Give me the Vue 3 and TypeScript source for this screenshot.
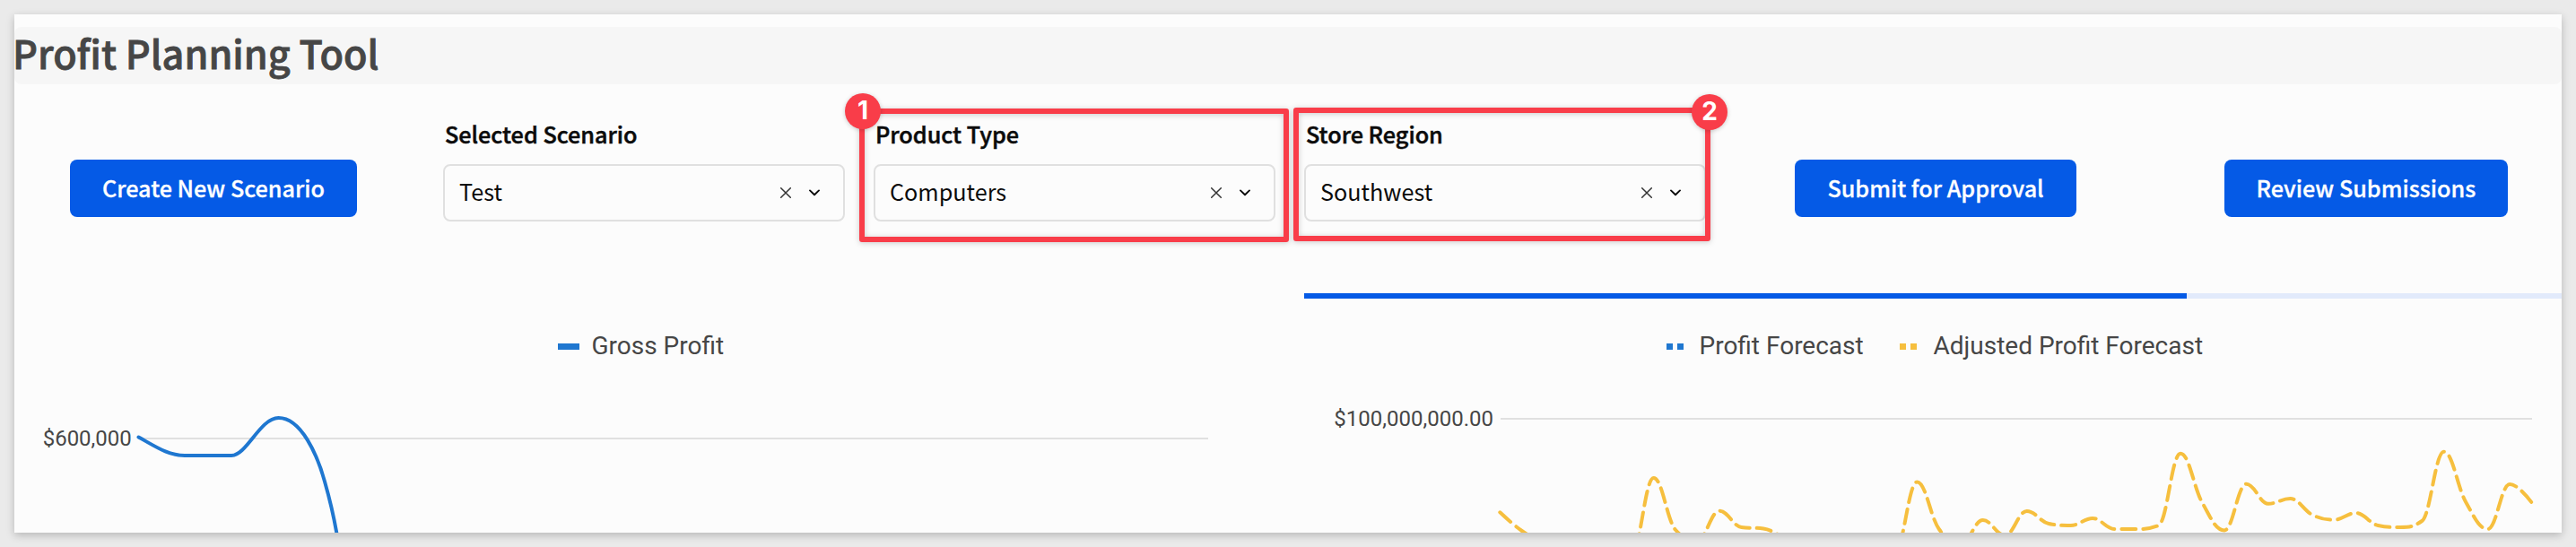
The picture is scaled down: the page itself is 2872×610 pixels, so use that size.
<script setup lang="ts">
interface Point {
  x: number
  y: number
}

const filters = [
  { id: 'scenario', label: 'Selected Scenario', value: 'Test', mark: '' },
  { id: 'product', label: 'Product Type', value: 'Computers', mark: '1' },
  { id: 'region', label: 'Store Region', value: 'Southwest', mark: '2' },
]

// Smooth curve whose control points never overshoot a local extreme.
function spline(points: Point[]): string {
  const s = 1.5
  const d = s + 1
  let path = `M${points[0].x} ${points[0].y}`
  let out: Point = points[0]
  for (let i = 1; i < points.length; i++) {
    const last = points[i - 1]
    const p = points[i]
    const next = points[i + 1]
    let left: Point = p
    let right: Point = p
    if (next) {
      const lx = (s * p.x + last.x) / d
      let ly = (s * p.y + last.y) / d
      const rx = (s * p.x + next.x) / d
      let ry = (s * p.y + next.y) / d
      const correction = rx !== lx ? ((ry - ly) * (rx - p.x)) / (rx - lx) + p.y - ry : 0
      ly += correction
      ry += correction
      if (ly > last.y && ly > p.y) {
        ly = Math.max(last.y, p.y)
        ry = 2 * p.y - ly
      } else if (ly < last.y && ly < p.y) {
        ly = Math.min(last.y, p.y)
        ry = 2 * p.y - ly
      }
      if (ry > next.y && ry > p.y) {
        ry = Math.max(next.y, p.y)
        ly = 2 * p.y - ry
      } else if (ry < next.y && ry < p.y) {
        ry = Math.min(next.y, p.y)
        ly = 2 * p.y - ry
      }
      left = { x: lx, y: ly }
      right = { x: rx, y: ry }
    }
    path += ` C${out.x} ${out.y} ${left.x} ${left.y} ${p.x} ${p.y}`
    out = right
  }
  return path
}

const grossProfit =
  'M154.5 487.5C175 499 188 508 206 508H258C275 508 290 466 310.5 466C336 466 354 508 362 537C368 558 373 580 376.3 600'

const adjusted = spline(
  [
    571.3, 592, 605, 613, 617, 619, 617.5, 533, 591, 602, 569.7, 588, 589.5, 600, 610, 613, 615,
    615, 614.3, 537.5, 590, 606.5, 580, 597, 570, 584, 586, 578, 590, 590, 586, 505.7, 561, 591.4,
    539.7, 561.7, 556, 574, 579.7, 572, 586, 588, 581, 503.7, 560, 590, 540, 560.5,
  ].map((y, i) => ({ x: 1672.3 + 24.475 * i, y })),
)
</script>

<template>
  <main class="stage">
    <section class="card">
      <header class="title-bar"><h1>Profit Planning Tool</h1></header>

      <div class="controls">
        <div class="action"><button type="button">Create New Scenario</button></div>
        <div v-for="f in filters" :key="f.id" class="field">
          <label>{{ f.label }}</label>
          <div class="select">
            <span>{{ f.value }}</span>
            <svg class="clear" viewBox="0 0 12 12"><path d="M.7.7 11.3 11.3M11.3.7.7 11.3" /></svg>
            <svg class="chevron" viewBox="0 0 12 8"><path d="M1 1.4 6 6.2 11 1.4" /></svg>
          </div>
          <div v-if="f.mark" class="highlight" :class="f.id"></div>
          <div v-if="f.mark" class="badge" :class="f.id">{{ f.mark }}</div>
        </div>
        <div class="action"><button type="button">Submit for Approval</button></div>
        <div class="action"><button type="button">Review Submissions</button></div>
      </div>

      <div class="progress"><div class="progress-value"></div></div>

      <div class="charts">
        <svg class="chart-left" viewBox="16 333 1438 261">
          <rect x="622" y="383" width="24" height="7" fill="#1f77d0" />
          <text class="legend" x="659.5" y="395">Gross Profit</text>
          <text class="tick" x="146.8" y="497" text-anchor="end">$600,000</text>
          <path class="gridline" d="M154 489H1347" />
          <path class="gross" :d="grossProfit" />
        </svg>
        <svg class="chart-right" viewBox="1454 333 1402 261">
          <path fill="#1f77d0" d="M1858 383h7v7h-7zM1870 383h7v7h-7z" />
          <text class="legend" x="1894.5" y="395">Profit Forecast</text>
          <path fill="#f6bf3e" d="M2118 383h7v7h-7zM2130 383h7v7h-7z" />
          <text class="legend" x="2155.5" y="395">Adjusted Profit Forecast</text>
          <text class="tick" x="1665" y="475" text-anchor="end">$100,000,000.00</text>
          <path class="gridline" d="M1673 467H2823" />
          <path class="adjusted" :d="adjusted" />
        </svg>
      </div>
    </section>
  </main>
</template>

<style>
body {
  margin: 0;
  background: #eaeaea;
}
</style>

<style scoped>
.stage {
  box-sizing: border-box;
  width: 2872px;
  height: 610px;
  padding: 16px;
  overflow: hidden;
  background: #eaeaea;
  font-family: 'Noto Sans CJK JP', 'Noto Sans CJK SC', sans-serif;
}
.card {
  display: flex;
  flex-direction: column;
  box-sizing: border-box;
  width: 2840px;
  height: 578px;
  padding-top: 14px;
  background: #fcfcfc;
  box-shadow: 0 3px 9px rgba(0, 0, 0, 0.22);
}
.title-bar {
  height: 64px;
  border-radius: 8px;
  background: #f6f6f6;
}
h1 {
  margin: 0 0 0 -2px;
  color: #464646;
  font-size: 43.2px;
  font-weight: 500;
  line-height: 56px;
  white-space: nowrap;
  -webkit-text-stroke: 0.8px #464646;
}
.controls {
  display: grid;
  grid-template-columns: repeat(6, 448px);
  column-gap: 32px;
  height: 233px;
  margin-left: -2px;
}
.action {
  display: flex;
  justify-content: center;
  padding-top: 84px;
}
button {
  height: 64px;
  padding: 0 36px 2px;
  border: 0;
  border-radius: 8px;
  background: #055ae6;
  color: #fff;
  font-family: inherit;
  font-size: 25.2px;
  font-weight: 500;
  line-height: 62px;
  white-space: nowrap;
  -webkit-text-stroke: 0.3px #fff;
}
.field {
  position: relative;
  padding-top: 36px;
}
label {
  display: block;
  height: 53px;
  padding-left: 2px;
  color: #0b0b0b;
  font-size: 25.2px;
  font-weight: 500;
  line-height: 38px;
  -webkit-text-stroke: 0.5px #0b0b0b;
}
.select {
  display: flex;
  align-items: center;
  box-sizing: border-box;
  height: 64px;
  padding: 0 26px 0 16px;
  border: 2px solid #e0e0e0;
  border-radius: 8px;
  color: #0b0b0b;
  font-size: 25.2px;
  line-height: 56px;
}
.select span {
  flex: 1;
  padding-bottom: 4px;
}
.select svg {
  fill: none;
  stroke-linecap: round;
}
.clear {
  width: 12px;
  height: 12px;
  margin-right: 20px;
  stroke: #333;
  stroke-width: 1.5;
}
.chevron {
  width: 12px;
  height: 8px;
  stroke: #0b0b0b;
  stroke-width: 1.9;
  stroke-linejoin: round;
}
.highlight {
  position: absolute;
  box-sizing: border-box;
  height: 149px;
  border: 6px solid #f93d49;
  border-radius: 3px;
  filter: drop-shadow(0 1px 3px rgba(0, 0, 0, 0.2));
}
.highlight.product {
  top: 27px;
  left: -16px;
  width: 479px;
}
.highlight.region {
  top: 26px;
  left: -12px;
  width: 465px;
}
.badge {
  position: absolute;
  width: 40px;
  height: 40px;
  border-radius: 50%;
  background: #f93d49;
  box-shadow: 0 1px 5px rgba(0, 0, 0, 0.2);
  color: #fff;
  font: 700 28px/39px Inter, sans-serif;
  text-align: center;
}
.badge.product {
  top: 10px;
  left: -32px;
}
.badge.region {
  top: 11px;
  left: 432px;
}
.progress {
  height: 6px;
  margin-left: 1438px;
  background: #e2eafb;
}
.progress-value {
  width: 984px;
  height: 6px;
  background: #055ae6;
}
.charts {
  display: flex;
  height: 261px;
}
.chart-left {
  width: 1438px;
  height: 261px;
}
.chart-right {
  width: 1402px;
  height: 261px;
}
.legend,
.tick {
  fill: #464646;
  font-family: Roboto, sans-serif;
}
.legend {
  font-size: 28px;
}
.tick {
  font-size: 24px;
}
.gridline {
  fill: none;
  stroke: #e0e0e0;
  stroke-width: 2;
}
.gross,
.adjusted {
  fill: none;
  stroke-width: 4;
  stroke-linecap: round;
  stroke-linejoin: round;
}
.gross {
  stroke: #1f77d0;
}
.adjusted {
  stroke: #f6bf3e;
  stroke-dasharray: 16 8;
}
</style>
